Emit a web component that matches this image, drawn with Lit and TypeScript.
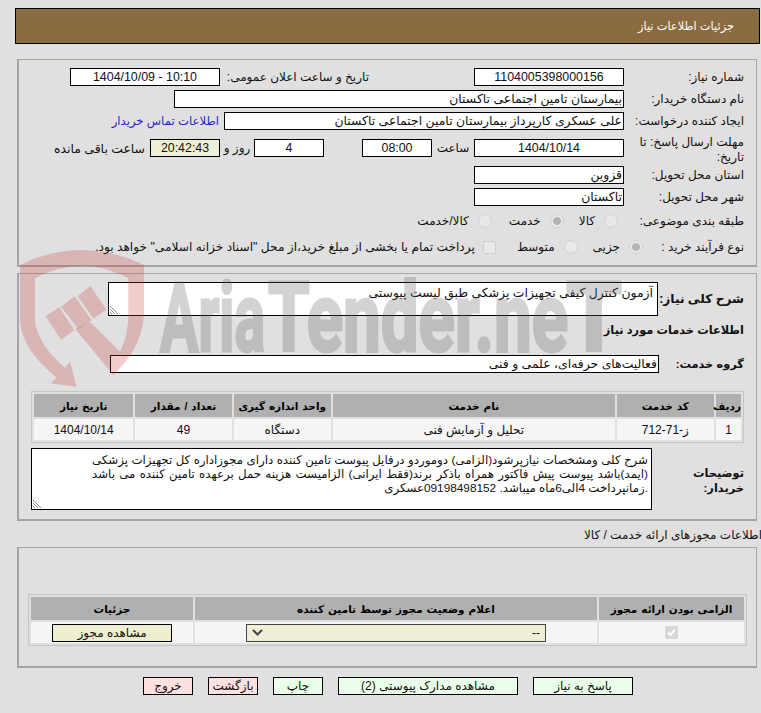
import { LitElement, html, css } from "lit";
import { customElement } from "lit/decorators.js";

@customElement("app-root")
export class AppRoot extends LitElement {
  static styles = css`
    :host {
      display: block;
      position: relative;
      width: 761px;
      height: 713px;
      overflow: hidden;
      background: #e0e0e0;
      font-family: "Liberation Sans", "DejaVu Sans", sans-serif;
      font-size: 12px;
      color: #111;
      direction: rtl;
    }
    .page {
      display: flex;
      flex-direction: column;
      padding: 8px 1px 0 15px;
    }
    .head {
      height: 34px;
      background: #8b6b41;
      border: 1px solid #000;
      color: #fff;
      display: flex;
      align-items: center;
      padding-right: 25px;
      font-size: 11.4px;
    }
    .panel {
      border: 1px solid #a5a5a5;
      border-width: 1px 1px 2px 2px;
      margin: 0 3px 0 2px;
    }
    .p1 {
      margin-top: 15px;
      height: 197px;
      padding-top: 8px;
    }
    .p2 {
      margin-top: 6px;
      height: 245px;
    }
    .p3 {
      height: 121px;
      padding-top: 46px;
      box-sizing: border-box;
    }
    .row {
      display: flex;
      align-items: center;
      height: 18px;
      margin-bottom: 4px;
      white-space: nowrap;
    }
    .gap9 {
      margin-bottom: 9px;
    }
    .radios {
      margin-top: 6px;
      margin-bottom: 8px;
    }
    .lab {
      width: 132px;
      padding-right: 12px;
      box-sizing: border-box;
      flex: none;
      line-height: 15px;
    }
    .short {
      width: 113px;
    }
    .wrap {
      white-space: normal;
      padding-top: 3px;
    }
    .f {
      height: 18px;
      box-sizing: border-box;
      border: 1px solid #000;
      background: #fff;
      flex: none;
      line-height: 16px;
      padding: 0 1px;
      overflow: hidden;
      font-size: 12.4px;
    }
    .c {
      text-align: center;
    }
    .w150 { width: 150px; }
    .w450 { width: 450px; }
    .w400 { width: 400px; }
    .w70 { width: 70px; }
    .w549 { width: 549px; }
    .timer { background: #efefd6; }
    .l2 { margin-right: 105px; width: 149px; }
    .t1 { width: 42px; text-align: center; }
    .t2 { width: 34px; text-align: center; }
    .gap38 { margin-right: 38px; }
    .ml5 { margin-right: 5px; font-size: 12.4px; }
    a { color: #2a1fd0; text-decoration: none; font-size: 11.7px; margin-right: 5px; }
    input {
      appearance: none;
      margin: 0;
      flex: none;
      background: #e9e9e9;
      border: 1px solid #cfcfcf;
      box-sizing: border-box;
    }
    input.radio {
      width: 14px;
      height: 14px;
      border-radius: 50%;
    }
    input.radio:checked {
      background: radial-gradient(circle, #b4b4b4 0 3.5px, #e9e9e9 4.5px);
    }
    input.box {
      width: 13px;
      height: 13px;
      border-radius: 1px;
    }
    .rt { margin-right: 9px; }
    .rt8 { margin-right: 8px; font-size: 12.2px; }
    input.s6 { margin-right: 6px; }
    input.s15 { margin-right: 15px; }
    input.s17 { margin-right: 17px; }
    input.s21 { margin-right: 21px; }
    .b {
      font-weight: bold;
      font-size: 11.4px;
    }
    .b2 {
      font-weight: bold;
      font-size: 12.2px;
    }
    .ta {
      position: relative;
      border: 1px solid #000;
      background: #fff;
      flex: none;
      box-sizing: border-box;
      font-size: 12.4px;
      line-height: 14px;
    }
    .ta svg {
      position: absolute;
      left: 1px;
      bottom: 1px;
    }
    .need {
      width: 550px;
      height: 34px;
      padding: 3px 4px 0 0;
    }
    .desc {
      width: 621px;
      height: 62px;
      padding: 4px 3px 0 60px;
      font-size: 11.8px;
    }
    .j {
      text-align-last: justify;
      white-space: nowrap;
    }
    .sec1 {
      display: flex;
      height: 34px;
      margin-top: 8px;
      align-items: center;
      white-space: nowrap;
    }
    .lb { width: 98px; padding-right: 12px; box-sizing: border-box; flex: none; }
    .title {
      padding-right: 12px;
      margin-top: 7px;
      height: 15px;
      line-height: 15px;
    }
    .sec3 { margin-top: 17px; margin-bottom: 0; }
    .lb3 { width: 97px; }
    table {
      border-collapse: separate;
      border-spacing: 2px;
      border: 1px solid #c4c4c4;
      table-layout: fixed;
      text-align: center;
    }
    .t-a { margin: 18px 12px 0 0; width: 713px; }
    .t-b { margin-right: 9px; width: 719px; }
    .c25 { width: 25px; }
    .c97 { width: 97px; }
    .c281 { width: 281px; }
    .c96 { width: 96px; }
    .c99 { width: 99px; }
    .c145 { width: 145px; }
    .c402 { width: 402px; }
    .c162 { width: 162px; }
    th {
      background: #b0b0b0;
      height: 23px;
      padding: 0;
      font-size: 10.5px;
      word-spacing: 1px;
      color: #000;
    }
    td {
      background: #f5f5f5;
      height: 21px;
      padding: 0;
    }
    .sec4 {
      display: flex;
      margin-top: 5px;
      white-space: nowrap;
    }
    .lb4 {
      width: 104px;
      padding: 18px 12px 0 0;
      box-sizing: border-box;
      flex: none;
      white-space: normal;
      line-height: 15px;
    }
    .cap {
      height: 26px;
      line-height: 28px;
      margin-right: -2px;
    }
    .view {
      display: block;
      margin: 0 auto;
      width: 120px;
      height: 18px;
      box-sizing: border-box;
      border: 1px solid #000;
      background: #efefd0;
      font: inherit;
      padding: 0;
      color: #111;
    }
    .sel {
      width: 300px;
      height: 18px;
      box-sizing: border-box;
      border: 1px solid #444;
      background: #f0f0d8;
      margin: 0 auto;
      display: flex;
      justify-content: space-between;
      align-items: center;
      padding: 0 5px;
    }
    .tick {
      display: block;
      width: 13px;
      height: 13px;
      margin: 0 auto;
      background: #d6d6d6;
      border-radius: 1px;
    }
    .bar {
      display: flex;
      gap: 15px;
      margin-top: 9px;
      padding-right: 127px;
    }
    .btn {
      height: 18px;
      width: 100px;
      box-sizing: border-box;
      border: 1px solid #000;
      background: #eaffea;
      font: inherit;
      padding: 0;
      color: #111;
    }
    .wide { width: 180px; }
    .small { width: 50px; }
    .red { background: #ffe0e0; }
    .mark {
      position: absolute;
      left: 0;
      top: 0;
      width: 761px;
      height: 713px;
      pointer-events: none;
      direction: ltr;
    }
    .logo {
      opacity: 0.28;
    }
    .logo text {
      font-family: Roboto, "Liberation Sans", sans-serif;
      font-weight: 700;
      font-size: 96px;
      fill: #666;
      stroke: #666;
      stroke-width: 3px;
    }
    .shield {
      fill: rgba(197, 58, 58, 0.26);
    }
  `;

  handle() {
    return html`<svg width="9" height="9" viewBox="0 0 9 9"><path d="M0 1l8 8M0 4l5 5M0 7l2 2" stroke="#777" stroke-width="0.8" fill="none" /></svg>`;
  }

  render() {
    return html`
      <div class="page">
        <div class="head">جزئیات اطلاعات نیاز</div>

        <div class="panel p1">
          <div class="row">
            <div class="lab">شماره نیاز:</div>
            <div class="f c w150">1104005398000156</div>
            <div class="l2">تاریخ و ساعت اعلان عمومی:</div>
            <div class="f c w150">10:10 - 1404/10/09</div>
          </div>
          <div class="row">
            <div class="lab">نام دستگاه خریدار:</div>
            <div class="f w450">بیمارستان تامین اجتماعی تاکستان</div>
          </div>
          <div class="row gap9">
            <div class="lab">ایجاد کننده درخواست:</div>
            <div class="f w400">علی عسکری کارپرداز بیمارستان تامین اجتماعی تاکستان</div>
            <a href="#">اطلاعات تماس خریدار</a>
          </div>
          <div class="row gap9">
            <div class="lab wrap">مهلت ارسال پاسخ: تا تاریخ:</div>
            <div class="f c w150">1404/10/14</div>
            <div class="t1">ساعت</div>
            <div class="f c w70">08:00</div>
            <div class="gap38"></div>
            <div class="f c w70">4</div>
            <div class="t2">روز و</div>
            <div class="f c w70 timer">20:42:43</div>
            <div class="ml5">ساعت باقی مانده</div>
          </div>
          <div class="row">
            <div class="lab">استان محل تحویل:</div>
            <div class="f w150">قزوین</div>
          </div>
          <div class="row">
            <div class="lab">شهر محل تحویل:</div>
            <div class="f w150">تاکستان</div>
          </div>
          <div class="row radios">
            <div class="lab">طبقه بندی موضوعی:</div>
            <input class="radio s6" type="radio" disabled />
            <span class="rt">کالا</span>
            <input class="radio s15" type="radio" disabled checked />
            <span class="rt">خدمت</span>
            <input class="radio s17" type="radio" disabled />
            <span class="rt">کالا/خدمت</span>
          </div>
          <div class="row">
            <div class="lab short">نوع فرآیند خرید :</div>
            <input class="radio" type="radio" disabled checked />
            <span class="rt">جزیی</span>
            <input class="radio s15" type="radio" disabled />
            <span class="rt">متوسط</span>
            <input class="box s21" type="checkbox" disabled />
            <span class="rt8">پرداخت تمام یا بخشی از مبلغ خرید،از محل "اسناد خزانه اسلامی" خواهد بود.</span>
          </div>
        </div>

        <div class="panel p2">
          <div class="sec1">
            <div class="lb b2">شرح کلی نیاز:</div>
            <div class="ta need">آزمون کنترل کیفی تجهیزات پزشکی طبق لیست پیوستی${this.handle()}</div>
          </div>
          <div class="title b">اطلاعات خدمات مورد نیاز</div>
          <div class="row sec3">
            <div class="lb lb3 b">گروه خدمت:</div>
            <div class="f w549">فعالیت‌های حرفه‌ای، علمی و فنی</div>
          </div>
          <table class="t-a">
            <colgroup>
              <col class="c25" /><col class="c97" /><col class="c281" />
              <col class="c97" /><col class="c96" /><col class="c99" />
            </colgroup>
            <tr>
              <th>ردیف</th><th>کد خدمت</th><th>نام خدمت</th><th>واحد اندازه گیری</th><th>تعداد / مقدار</th><th>تاریخ نیاز</th>
            </tr>
            <tr>
              <td>1</td><td>ز-71-712</td><td>تحلیل و آزمایش فنی</td><td>دستگاه</td><td>49</td><td>1404/10/14</td>
            </tr>
          </table>
          <div class="sec4">
            <div class="lb4 b">توضیحات خریدار:</div>
            <div class="ta desc">
              <div class="j">شرح کلی ومشخصات نیازپرشود(الزامی) دوموردو درفایل پیوست تامین کننده دارای مجوزاداره کل تجهیزات پزشکی</div>
              <div class="j">(ایمد)باشد پیوست پیش فاکتور همراه باذکر برند(فقط ایرانی) الزامیست هزینه حمل برعهده تامین کننده می باشد</div>
              <div>.زمانپرداخت 4الی6ماه میباشد. 09198498152عسکری</div>
              ${this.handle()}
            </div>
          </div>
        </div>

        <div class="cap">اطلاعات مجوزهای ارائه خدمت / کالا</div>

        <div class="panel p3">
          <table class="t-b">
            <colgroup>
              <col class="c145" /><col class="c402" /><col class="c162" />
            </colgroup>
            <tr>
              <th>الزامی بودن ارائه مجوز</th><th>اعلام وضعیت مجوز توسط تامین کننده</th><th>جزئیات</th>
            </tr>
            <tr>
              <td>
                <span class="tick">
                  <svg width="13" height="13" viewBox="0 0 13 13"><path d="M3 6.5l2.5 2.5L10 3.5" stroke="#fff" stroke-width="2" fill="none" /></svg>
                </span>
              </td>
              <td>
                <div class="sel">
                  <span>--</span>
                  <svg width="11" height="7" viewBox="0 0 11 7"><path d="M1 1l4.5 4.5L10 1" stroke="#444" stroke-width="2" fill="none" /></svg>
                </div>
              </td>
              <td><button class="view">مشاهده مجوز</button></td>
            </tr>
          </table>
        </div>

        <div class="bar">
          <button class="btn">پاسخ به نیاز</button>
          <button class="btn wide">مشاهده مدارک پیوستی (2)</button>
          <button class="btn small">چاپ</button>
          <button class="btn small red">بازگشت</button>
          <button class="btn small red">خروج</button>
        </div>
      </div>

      <svg class="mark" viewBox="0 0 761 713">
        <g class="shield" transform="translate(10 245) scale(0.3333)">
          <path d="M30 60Q120 15 215 15Q310 15 402 60L402 210Q395 310 310 390L196 252L240 230L330 320Q355 270 355 210L355 100Q285 62 215 62Q145 62 75 100L75 230Q85 300 165 368L180 350L200 425L122 415L140 398Q30 310 30 220Z" />
          <path d="M107 214L148 187L193 256L153 284Z" />
          <path d="M153 185L194 154L245 226L205 252Z" />
          <path d="M203 154L241 123L290 194L250 220Z" />
        </g>
        <g class="logo">
          <text x="160" y="351" textLength="105" lengthAdjust="spacingAndGlyphs">Aria</text>
          <text x="268" y="351" textLength="300" lengthAdjust="spacingAndGlyphs">Tender.ne</text>
          <text x="566" y="351" textLength="56" lengthAdjust="spacingAndGlyphs">T</text>
        </g>
      </svg>
    `;
  }
}
